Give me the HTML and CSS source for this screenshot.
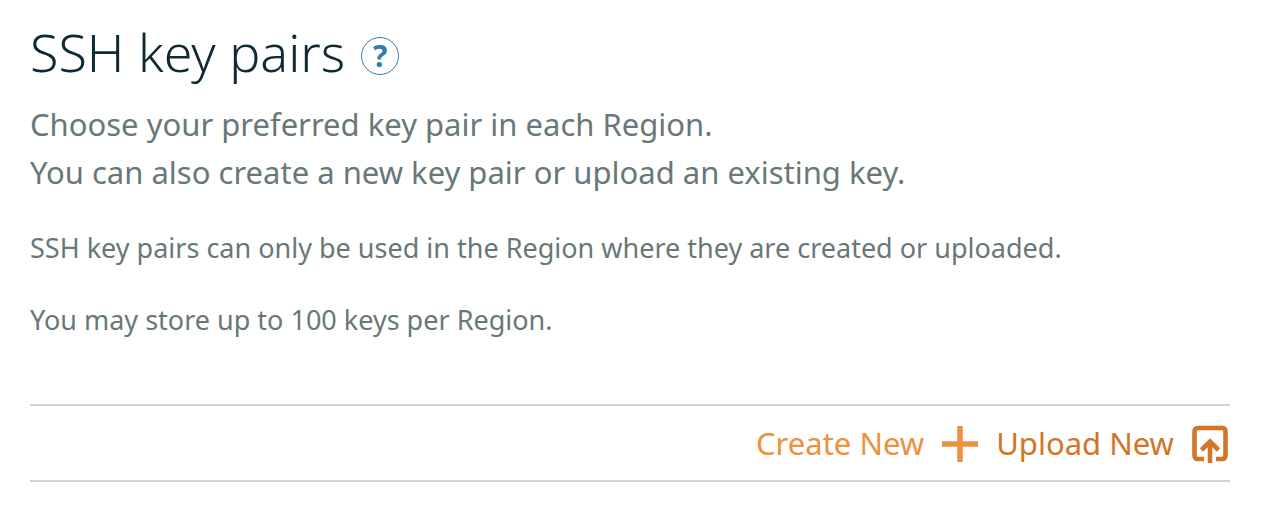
FILE: index.html
```html
<!DOCTYPE html>
<html lang="en">
<head>
<meta charset="utf-8">
<title>SSH key pairs</title>
<link rel="stylesheet" href="styles.css">
</head>
<body>
<main class="panel">
  <header class="heading">
    <h1 class="title">SSH key pairs</h1>
    <button class="help" type="button" aria-label="Help">?</button>
  </header>
  <p class="lead">Choose your preferred key pair in each Region.<br>You can also create a new key pair or upload an existing key.</p>
  <p class="note">SSH key pairs can only be used in the Region where they are created or uploaded.</p>
  <p class="note">You may store up to 100 keys per Region.</p>
  <div class="actions">
    <button class="action action-create" type="button">
      Create New
      <svg class="icon" viewBox="0 0 36 38" aria-hidden="true"><path d="M18 1v36M0 19h36" fill="none" stroke="currentColor" stroke-width="5.500"/></svg>
    </button>
    <button class="action action-upload" type="button">
      Upload New
      <svg class="icon" viewBox="0 0 36 38" aria-hidden="true"><path d="M12 34H6q-3.500 0-3.500-3.500V6.500Q2.500 3 6 3h24q3.500 0 3.500 3.500v24q0 3.500-3.500 3.500h-6M18 38V17M9.500 25l8.500-8.500 8.500 8.500" fill="none" stroke="currentColor" stroke-width="4.600"/></svg>
    </button>
  </div>
</main>
</body>
</html>
```
FILE: styles.css
```css
* {
  box-sizing: border-box;
}

body {
  margin: 0;
  background: #fff;
  color: #687878;
  font-family: "Noto Sans", "Open Sans", sans-serif;
}

.panel {
  padding: 20px 56px 30px 30px;
}

.heading {
  display: flex;
  align-items: center;
  gap: 16px;
}

.title {
  margin: 0;
  color: #0e2a35;
  font-size: 52px;
  font-weight: 300;
  line-height: 64px;
}

.help {
  width: 38px;
  height: 38px;
  margin-top: 8px;
  padding: 0;
  border: 1px solid #337ab7;
  border-radius: 50%;
  background: none;
  color: #337ab7;
  font: 700 30px/34px "Noto Sans", sans-serif;
}

.lead {
  margin: 16px 0 32px;
  font-size: 31px;
  line-height: 48px;
}

.note {
  margin: 0 0 32px;
  font-size: 27px;
  line-height: 40px;
}

.actions {
  display: flex;
  justify-content: flex-end;
  gap: 18px;
  margin-top: 64px;
  padding: 0 2px;
  border: solid #d0d6d5;
  border-width: 2px 0;
}

.action {
  display: flex;
  align-items: center;
  gap: 18px;
  padding: 0;
  border: 0;
  background: none;
  font: 400 31px/74px "Noto Sans", sans-serif;
}

.action-create {
  color: #ec913d;
}

.action-upload {
  color: #d27529;
}

.icon {
  width: 36px;
  height: 38px;
  margin-top: 2px;
}
```
